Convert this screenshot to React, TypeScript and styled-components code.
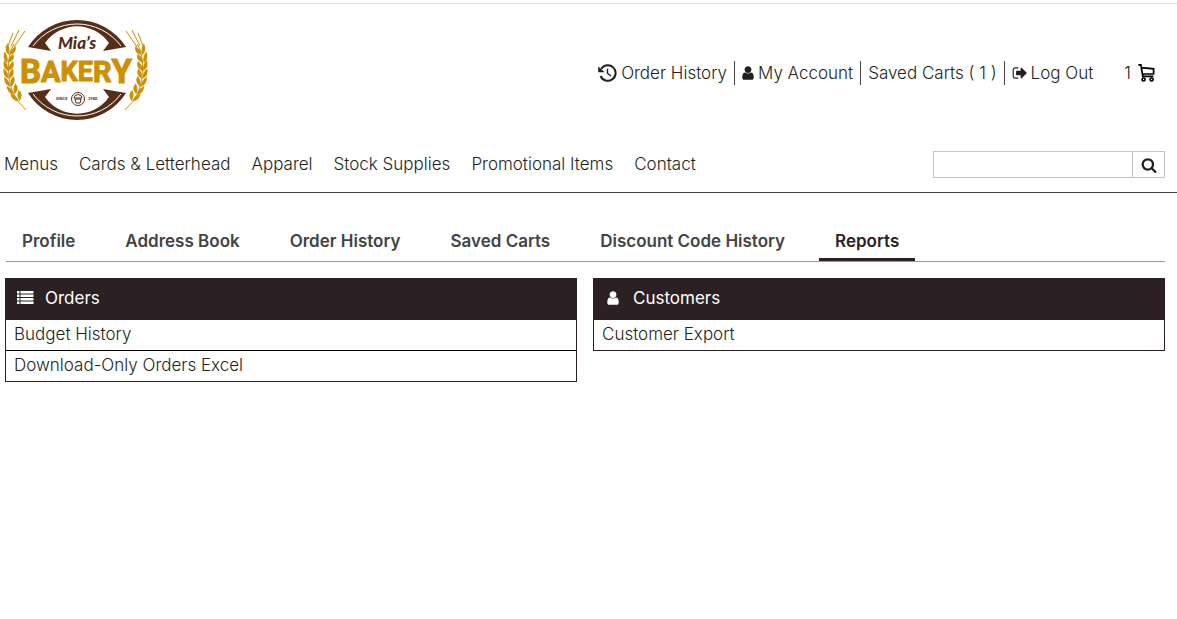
import React from 'react';
import styled, { createGlobalStyle } from 'styled-components';

const INK = '#2b2024';

const Global = createGlobalStyle`
  * { box-sizing: border-box; }
  body {
    margin: 0;
    background: #fff;
    color: #231f20;
    font: 300 17px/24px Inter, "Open Sans", sans-serif;
  }
  a { color: inherit; text-decoration: none; }
  ul { list-style: none; margin: 0; padding: 0; }
`;

const Page = styled.div`
  border-top: 1px solid #ddd;
  margin-top: 3px;
`;

const Header = styled.header`
  display: flex;
  align-items: center;
  justify-content: space-between;
  padding: 12px 22px 0 0;
`;

const Logo = styled.svg`
  display: block;
  width: 152px;
  height: 112px;
`;

const UserNav = styled.ul`
  display: flex;
  align-items: center;
  padding-top: 2px;
`;

const UserItem = styled.li<{ $divided?: boolean }>`
  padding: 0 7px;
  border-right: ${p => (p.$divided ? '1px solid #444' : '0')};
  a { display: flex; align-items: center; gap: 4px; }
`;

const CartItem = styled.li`
  padding-left: 24px;
  a { display: flex; align-items: center; gap: 7px; }
`;

const Glyph = styled.svg<{ $w?: number; $h?: number }>`
  display: block;
  flex: none;
  width: ${p => p.$w ?? 16}px;
  height: ${p => p.$h ?? 16}px;
  fill: currentColor;
`;

const MainBar = styled.div`
  display: flex;
  align-items: center;
  justify-content: space-between;
  padding: 23px 12px 14px 4px;
  border-bottom: 1px solid #4a4245;
`;

const MainNav = styled.ul`
  display: flex;
  gap: 21px;
  padding-bottom: 2px;
`;

const Search = styled.form`
  display: flex;
  height: 27px;
  border: 1px solid #c3c3c3;
`;

const SearchInput = styled.input`
  width: 198px;
  border: 0;
  padding: 0 8px;
  font: inherit;
  outline: none;
`;

const SearchButton = styled.button`
  display: flex;
  align-items: center;
  justify-content: center;
  width: 32px;
  padding: 0;
  border: 0;
  border-left: 1px solid #c3c3c3;
  background: #fff;
  color: #231f20;
`;

const Tabs = styled.ul`
  display: flex;
  gap: 18px;
  margin: 32px 12px 0 6px;
  border-bottom: 1px solid #999;
`;

const Tab = styled.a<{ $active?: boolean }>`
  display: block;
  padding: 4px 16px 5px;
  border-bottom: 3px solid ${p => (p.$active ? INK : 'transparent')};
  color: ${p => (p.$active ? INK : '#444')};
  font-weight: 600;
`;

const Panels = styled.main`
  display: grid;
  grid-template-columns: 1fr 1fr;
  align-items: start;
  gap: 16px;
  padding: 16px 12px 16px 5px;
`;

const Panel = styled.section`
  border: 1px solid ${INK};
`;

const PanelTitle = styled.h2`
  display: flex;
  align-items: center;
  gap: 11px;
  margin: 0;
  padding: 7px 10px 10px;
  background: ${INK};
  color: #fff;
  font-size: 17px;
  font-weight: 400;
`;

const PanelRow = styled.li`
  padding: 2px 8px 4px;
  & + & { border-top: 1px solid #000; }
`;

const USER = 'M1536 1399q0 109-62.5 187t-150.5 78h-854q-88 0-150.5-78t-62.5-187q0-85 8.5-160.5t31.5-152 58.5-131 94-89 134.5-34.5q131 128 313 128t313-128q76 0 134.5 34.5t94 89 58.5 131 31.5 152 8.5 160.5zm-256-887q0 159-112.5 271.5t-271.5 112.5-271.5-112.5-112.5-271.5 112.5-271.5 271.5-112.5 271.5 112.5 112.5 271.5z';
const SIGN_OUT = 'M704 1440q0 4 1 20t.5 26.5-3 23.5-10 19.5-20.5 6.5h-320q-119 0-203.5-84.5t-84.5-203.5v-704q0-119 84.5-203.5t203.5-84.5h320q13 0 22.5 9.5t9.5 22.5q0 4 1 20t.5 26.5-3 23.5-10 19.5-20.5 6.5h-320q-66 0-113 47t-47 113v704q0 66 47 113t113 47h312l11.5 1 11.5 3 8 5.5 7 9 2 13.5zm928-544q0 26-19 45l-544 544q-19 19-45 19t-45-19-19-45v-288h-448q-26 0-45-19t-19-45v-384q0-26 19-45t45-19h448v-288q0-26 19-45t45-19 45 19l544 544q19 19 19 45z';
const SEARCH = 'M1216 832q0-185-131.5-316.5t-316.5-131.5-316.5 131.5-131.5 316.5 131.5 316.5 316.5 131.5 316.5-131.5 131.5-316.5zm512 832q0 52-38 90t-90 38q-54 0-90-38l-343-342q-179 124-399 124-143 0-273.5-55.5t-225-150-150-225-55.5-273.5 55.5-273.5 150-225 225-150 273.5-55.5 273.5 55.5 225 150 150 225 55.5 273.5q0 220-124 399l343 343q37 37 37 90z';

const HistoryIcon = () => (
  <Glyph $w={19} $h={18} viewBox="0 0 19 18" aria-hidden>
    <path d="M3.2 4.8A7.8 7.8 0 1 1 2.6 12" fill="none" stroke="currentColor" strokeWidth="2" />
    <path d="M.2 2.4v5.8h6.6z" />
    <path d="M9.5 4.8v4.6l3.6 2.6" fill="none" stroke="currentColor" strokeWidth="1.4" />
  </Glyph>
);

const CartIcon = () => (
  <Glyph $w={17} $h={20} viewBox="0 0 17 20" aria-hidden>
    <g fill="none" stroke="#000" strokeWidth="1.7">
      <path d="M.3 1.8h2.600l1.900 11.600h10.600M3.600 4.600l12 1.200v5.200H4.600" />
      <circle cx="5.6" cy="16.5" r="1.5" />
      <circle cx="13.6" cy="16.5" r="1.5" />
    </g>
  </Glyph>
);

const ListIcon = () => (
  <Glyph $w={18} $h={16} viewBox="0 0 18 16" aria-hidden>
    {[1, 4.5, 8, 11.5].map(y => (
      <path key={y} d={`M1 ${y}h2.500v2.500h-2.500zM4.500 ${y}h13v2.500h-13z`} />
    ))}
  </Glyph>
);

/* Each letter of the arched word: glyph, size, baseline */
const LETTERS: [string, number, number][] = [
  ['B', 33, 67], ['A', 29, 66], ['K', 27, 65], ['E', 27, 65], ['R', 29, 66], ['Y', 33, 67],
];

const KERNELS = [[10, 33, 12], [8, 41, 7], [8, 49, 1], [8, 57, -5], [9, 65, -11], [12, 73, -20], [16, 80, -28]];

const Wheat = () => (
  <g>
    <path d="M26 94Q8 78 8.5 54Q8 36 14 28" fill="none" stroke="#cd9000" strokeWidth="1" />
    <path d="M8 30 13 17M11 30 19 14M14 31 25 15" stroke="#cd9000" strokeWidth="1" />
    {KERNELS.map(([x, y, r]) => (
      <g key={y} transform={`translate(${x} ${y}) rotate(${r})`} fill="#cd9000">
        <path d="M0 6Q-6 3-4-5Q1 0 0 6z" />
        <path d="M.8 6Q0 0 5-4Q8 2 .8 6z" />
      </g>
    ))}
  </g>
);

const Crescent = () => (
  <g>
    <path d="M28 31A58 58 0 0 1 126 31L103 35L109 27A39 39 0 0 0 45 27L51 35z" fill="#562d17" />
    <path d="M33 30A55 55 0 0 1 121 30" fill="none" stroke="#fff" strokeWidth="1" />
  </g>
);

const BakeryLogo = () => (
  <Logo viewBox="0 0 152 112" role="img" aria-label="Mia's Bakery, since 1980">
    <Wheat />
    <g transform="translate(151 0) scale(-1 1)"><Wheat /></g>
    <Crescent />
    <g transform="translate(0 108) scale(1 -1)"><Crescent /></g>
    <text x="77" y="33" textAnchor="middle" fontFamily="Lato" fontStyle="italic" fontWeight="900" fontSize="17" fill="#562d17">Mia’s</text>
    <text x="20" fill="#cd9000" stroke="#cd9000" strokeWidth="1" fontFamily="Roboto" fontWeight="700">
      {LETTERS.map(([c, size, y]) => <tspan key={c} y={y} fontSize={size}>{c}</tspan>)}
    </text>
    <g fill="#562d17" fontFamily="Lato" fontWeight="900" fontSize="4">
      <text x="56" y="84">SINCE</text>
      <text x="88" y="84">1980</text>
    </g>
    <circle cx="78" cy="83" r="6.5" fill="#fff" stroke="#562d17" strokeWidth="1" />
    <path d="M75 83h6l-1 4h-4zM74 82q0-3 4-3.500q4 .5 4 3.500z" fill="none" stroke="#562d17" strokeWidth="1" />
  </Logo>
);

const NAV = ['Menus', 'Cards & Letterhead', 'Apparel', 'Stock Supplies', 'Promotional Items', 'Contact'];
const TABS = ['Profile', 'Address Book', 'Order History', 'Saved Carts', 'Discount Code History', 'Reports'];

export default function App() {
  return (
    <Page>
      <Global />
      <Header>
        <a href="#home"><BakeryLogo /></a>
        <UserNav>
          <UserItem $divided><a href="#history"><HistoryIcon />Order History</a></UserItem>
          <UserItem $divided>
            <a href="#account"><Glyph $w={12} viewBox="256 0 1280 1792" aria-hidden><path d={USER} /></Glyph>My Account</a>
          </UserItem>
          <UserItem $divided><a href="#saved">Saved Carts ( 1 )</a></UserItem>
          <UserItem>
            <a href="#logout"><Glyph $w={15} viewBox="0 0 1664 1792" aria-hidden><path d={SIGN_OUT} /></Glyph>Log Out</a>
          </UserItem>
          <CartItem><a href="#cart" aria-label="Cart, 1 item">1<CartIcon /></a></CartItem>
        </UserNav>
      </Header>
      <MainBar>
        <nav><MainNav>{NAV.map(n => <li key={n}><a href="#nav">{n}</a></li>)}</MainNav></nav>
        <Search role="search">
          <SearchInput type="text" aria-label="Search" />
          <SearchButton type="button" aria-label="Submit search">
            <Glyph viewBox="0 0 1792 1792" aria-hidden><path d={SEARCH} /></Glyph>
          </SearchButton>
        </Search>
      </MainBar>
      <Tabs>{TABS.map(t => <li key={t}><Tab href="#tab" $active={t === 'Reports'}>{t}</Tab></li>)}</Tabs>
      <Panels>
        <Panel>
          <PanelTitle><ListIcon />Orders</PanelTitle>
          <ul>
            <PanelRow><a href="#budget">Budget History</a></PanelRow>
            <PanelRow><a href="#download">Download-Only Orders Excel</a></PanelRow>
          </ul>
        </Panel>
        <Panel>
          <PanelTitle><Glyph $w={18} viewBox="0 0 1792 1792" aria-hidden><path d={USER} /></Glyph>Customers</PanelTitle>
          <ul><PanelRow><a href="#export">Customer Export</a></PanelRow></ul>
        </Panel>
      </Panels>
    </Page>
  );
}
